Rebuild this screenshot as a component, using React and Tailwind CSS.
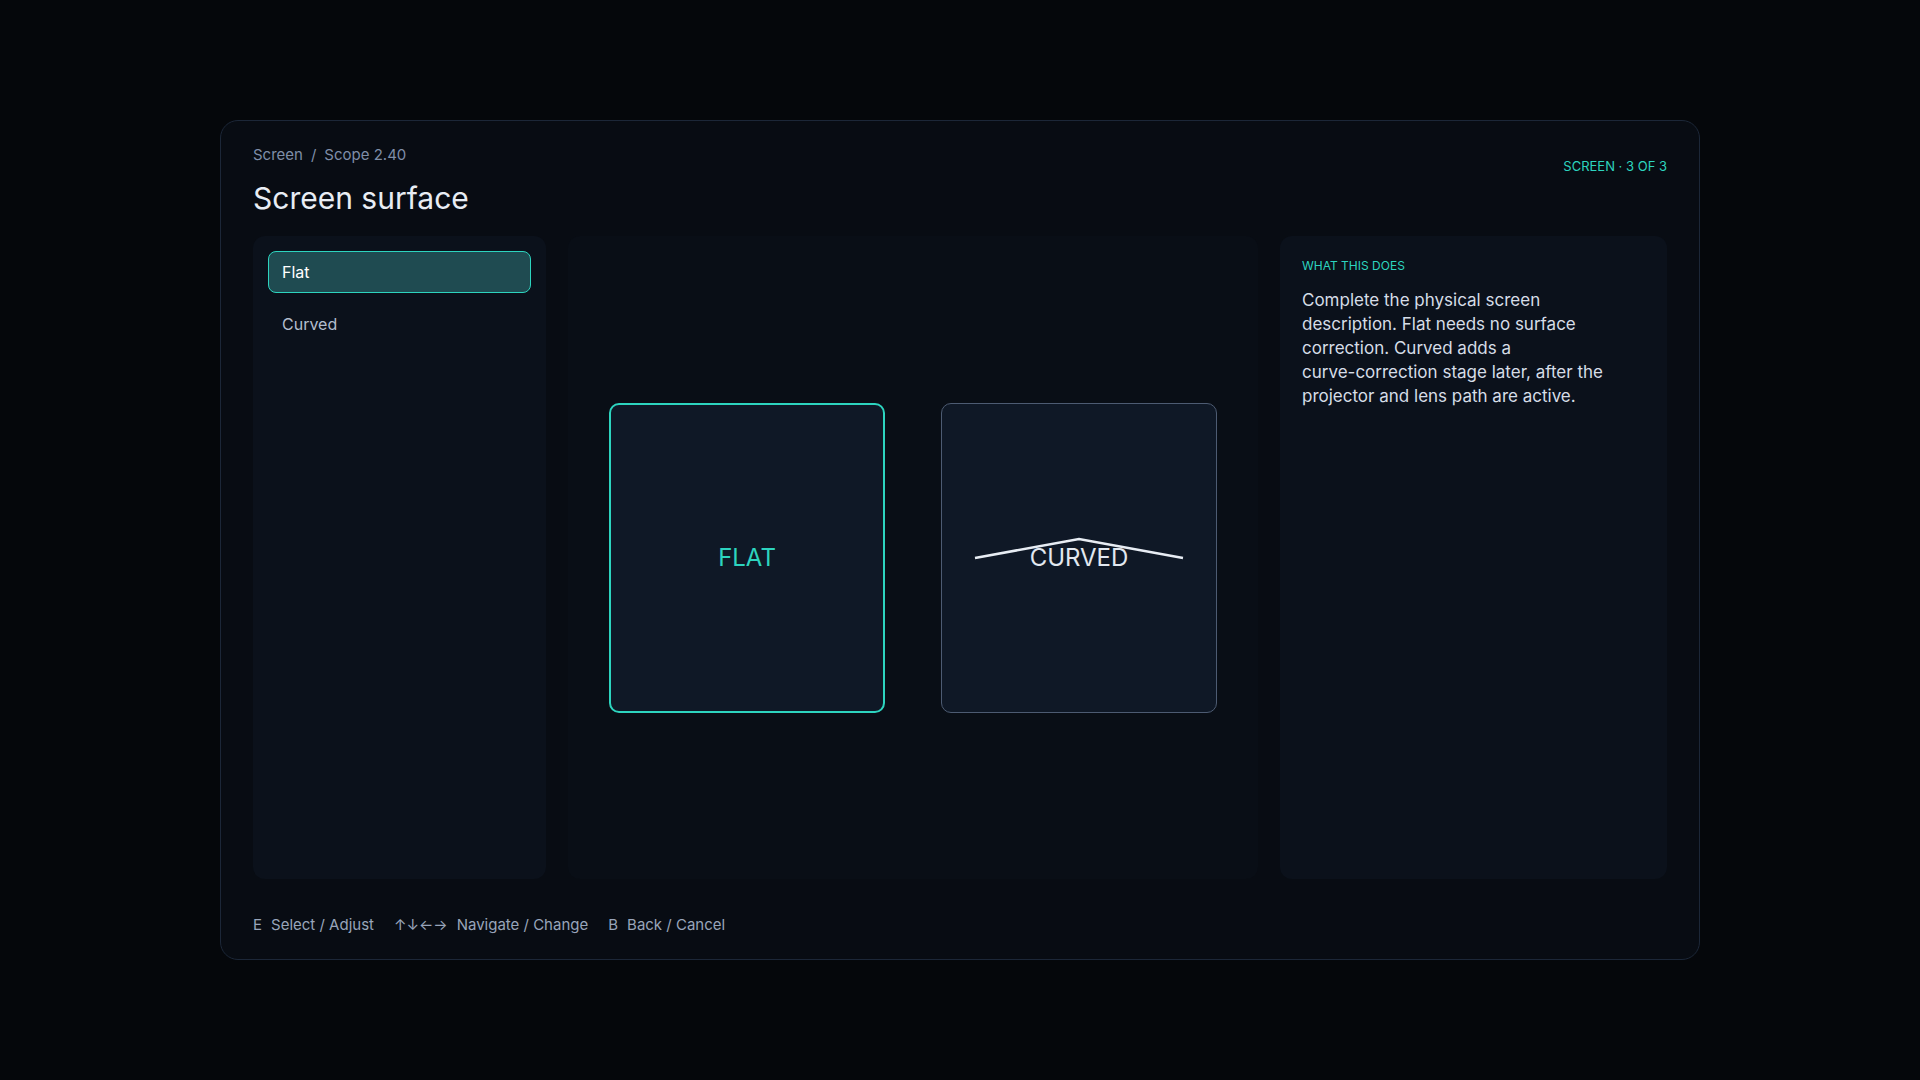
import React from 'react'

const options = ['Flat', 'Curved']

const hints = [
  { key: 'E', label: 'Select / Adjust' },
  { key: '↑↓←→', label: 'Navigate / Change' },
  { key: 'B', label: 'Back / Cancel' },
]

const App = () => {
  return (
    <div className="min-h-screen w-full bg-[#05070b] font-['Inter',sans-serif] pt-[120px]">
      <div className="mx-auto w-[1480px] h-[840px] rounded-[18px] border border-[#1c2738] bg-[#080c13] px-8 pt-6 pb-6 flex flex-col">
        {/* header */}
        <div className="flex justify-between items-start">
          <div>
            <div className="flex items-center text-[15px] leading-5 text-[#7f8ea8]">
              <span>Screen</span>
              <span className="mx-2">/</span>
              <span>Scope 2.40</span>
            </div>
            <h1 className="mt-[15px] text-[30px] leading-9 text-[#e8edf4] font-normal">
              Screen surface
            </h1>
          </div>
          <div className="mt-[13px] text-[13px] leading-4 text-[#2dd4bf]">
            SCREEN · 3 OF 3
          </div>
        </div>

        {/* panels */}
        <div className="mt-5 flex gap-[22px] h-[643px]">
          <div className="w-[293px] shrink-0 rounded-xl bg-[#0b111b] p-[15px] flex flex-col gap-[10px]">
            {options.map((o, i) => (
              <div
                key={o}
                className={
                  i === 0
                    ? 'h-[42px] flex items-center px-[13px] rounded-lg border-[1.5px] border-[#2dd4bf] bg-[#1f4b51] text-white text-base'
                    : 'h-[42px] flex items-center px-[14px] rounded-lg text-[#b3bece] text-base'
                }
              >
                {o}
              </div>
            ))}
          </div>

          <div className="flex-1 rounded-xl bg-[#090e16] flex items-center justify-center gap-[56px]">
            <div className="w-[276px] h-[310px] rounded-[10px] border-2 border-[#2dd4bf] bg-[#0f1826] flex items-center justify-center">
              <span className="text-2xl text-[#2dd4bf]">FLAT</span>
            </div>
            <div className="relative w-[276px] h-[310px] rounded-[10px] border border-[#4d5b72] bg-[#0f1826] flex items-center justify-center">
              <svg
                className="absolute left-0 top-0"
                width="274"
                height="308"
                viewBox="0 0 274 308"
              >
                <polyline
                  points="33,154 137,135 241,154"
                  fill="none"
                  stroke="#e8edf4"
                  strokeWidth="2.5"
                />
              </svg>
              <span className="relative text-2xl text-[#e2e8f0]">CURVED</span>
            </div>
          </div>

          <div className="w-[387px] shrink-0 rounded-xl bg-[#0b111b] p-[22px]">
            <div className="text-xs leading-4 text-[#2dd4bf]">WHAT THIS DOES</div>
            <p className="mt-[14px] max-w-[320px] text-[17px] leading-6 text-[#d6dde7]">
              Complete the physical screen description. Flat needs no surface correction. Curved adds a{' '}
              <span className="whitespace-nowrap">curve-correction</span> stage later, after the projector and lens path are active.
            </p>
          </div>
        </div>

        {/* footer */}
        <div className="mt-[36px] flex items-center gap-[20px] text-[15px] leading-5 text-[#98a5ba]">
          {hints.map((h) => (
            <div key={h.key} className="flex items-center gap-[9px]">
              <span>{h.key}</span>
              <span>{h.label}</span>
            </div>
          ))}
        </div>
      </div>
    </div>
  )
}

export default App
